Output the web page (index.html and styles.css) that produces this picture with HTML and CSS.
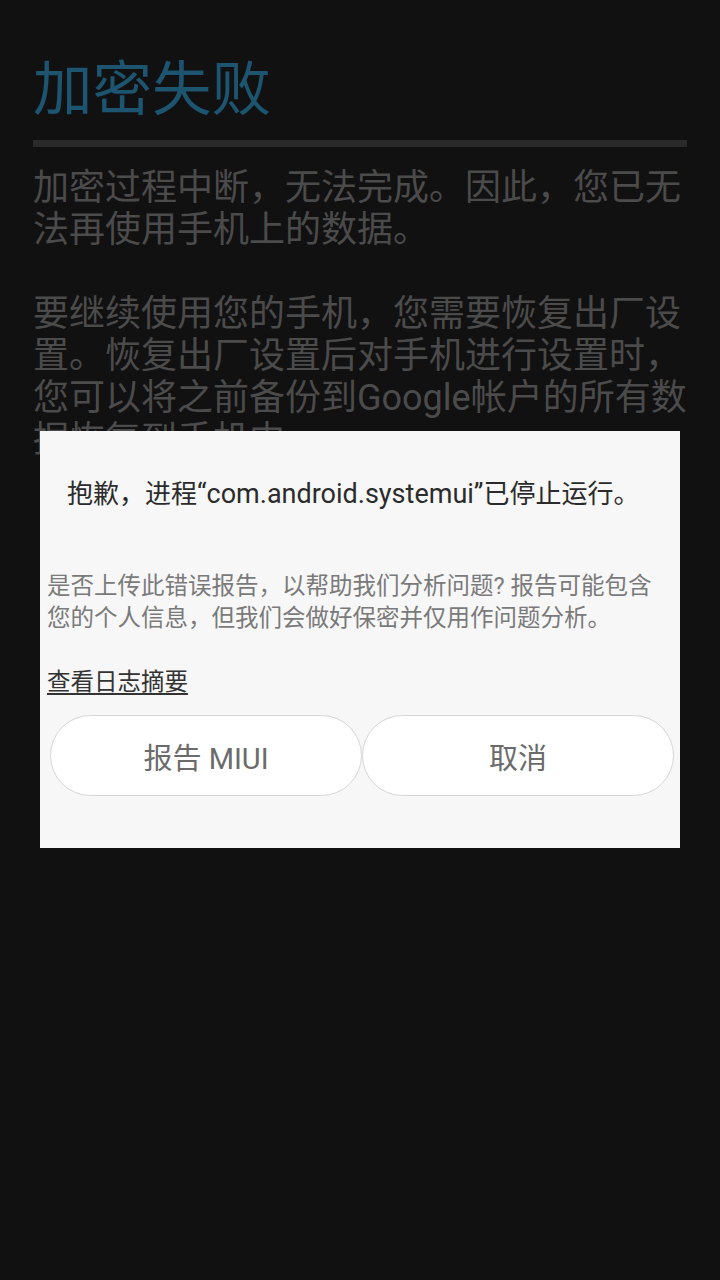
FILE: index.html
```html
<!DOCTYPE html>
<html lang="zh-CN">
<head>
<meta charset="utf-8">
<title>加密失败</title>
<link rel="stylesheet" href="styles.css">
</head>
<body>
<div class="screen">
  <div class="title">加密失败</div>
  <div class="rule"></div>
  <p class="body">加密过程中断，无法完成。因此，您已无法再使用手机上的数据。</p>
  <p class="body gap">要继续使用您的手机，您需要恢复出厂设置。恢复出厂设置后对手机进行设置时，您可以将之前备份到Google帐户的所有数据恢复到手机中。</p>
</div>
<div class="dialog">
  <div class="dlg-title">抱歉，进程<span class="pkg">“com.android.systemui”</span>已停止运行。</div>
  <div class="dlg-msg">是否上传此错误报告，以帮助我们分析问题? 报告可能包含<br>您的个人信息，但我们会做好保密并仅用作问题分析。</div>
  <div class="dlg-link">查看日志摘要</div>
  <div class="dlg-buttons">
    <div class="btn">报告 MIUI</div>
    <div class="btn">取消</div>
  </div>
</div>
</body>
</html>
```

FILE: styles.css
```css
html, body {
  margin: 0;
  padding: 0;
}
body {
  width: 720px;
  height: 1280px;
  overflow: hidden;
  background: #111111;
  font-family: Roboto, "Noto Sans CJK SC", sans-serif;
  position: relative;
}
.screen {
  padding: 55px 30px 0 33px;
}
.title {
  font-size: 59.5px;
  line-height: 71px;
  color: #1d5470;
}
.rule {
  margin-top: 14px;
  margin-right: 3px;
  height: 7px;
  background: #2a2a2a;
}
.body {
  margin: 20px 0 0 0;
  font-size: 36px;
  line-height: 42px;
  color: #4b4b4b;
}
.body.gap {
  margin-top: 42px;
}
.dialog {
  position: absolute;
  left: 40px;
  top: 431px;
  width: 640px;
  height: 417px;
  background: #f7f7f7;
  box-sizing: border-box;
  padding-top: 46px;
}
.dlg-title {
  padding-left: 27px;
  font-size: 26px;
  line-height: 34px;
  color: #2b2b2b;
  white-space: nowrap;
}
.pkg {
  font-size: 27px;
}
.dlg-msg {
  margin-top: 59px;
  padding-left: 7px;
  font-size: 23.5px;
  line-height: 32px;
  color: #7a7a7a;
  white-space: nowrap;
}
.dlg-link {
  margin-top: 32px;
  padding-left: 7px;
  font-size: 23.5px;
  line-height: 32px;
  color: #333333;
  text-decoration: underline;
  text-underline-offset: 3px;
}
.dlg-buttons {
  margin-top: 17px;
  padding-left: 10px;
  display: flex;
}
.btn {
  width: 312px;
  height: 81px;
  box-sizing: border-box;
  border: 1.5px solid #d6d6d6;
  border-radius: 41px;
  background: #ffffff;
  display: flex;
  align-items: center;
  justify-content: center;
  font-size: 29px;
  color: #6b6b6b;
}
```
